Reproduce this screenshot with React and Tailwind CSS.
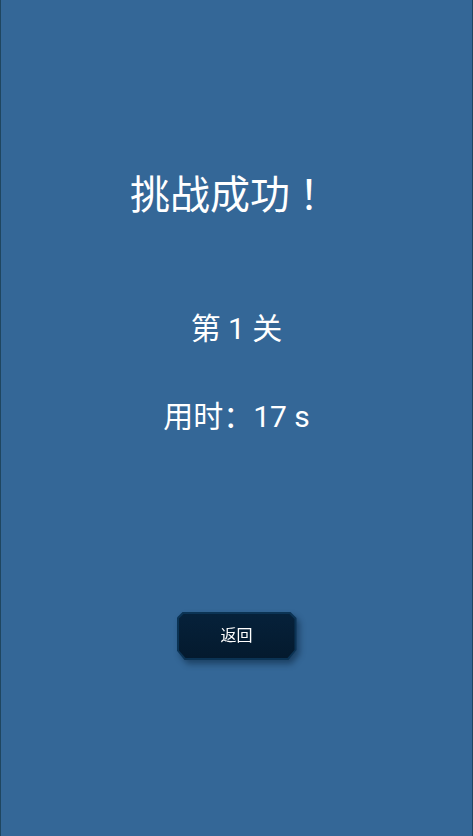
// Result screen shown after a level is cleared
const FONT = { fontFamily: 'Roboto, "Noto Sans CJK SC", sans-serif' };

function BackButton() {
  return (
    <div className="relative w-[120px] h-[48px] drop-shadow-[3px_4px_3px_rgba(0,20,40,0.45)]">
      <div className="absolute inset-0 bg-[#0b3354] [clip-path:polygon(6px_0,114px_0,120px_6px,120px_38px,112px_48px,8px_48px,0_38px,0_6px)]" />
      <button className="absolute inset-[2px] flex items-center justify-center bg-gradient-to-b from-[#06213a] to-[#041a2e] text-white text-[16px] [clip-path:polygon(5px_0,111px_0,116px_5px,116px_36px,109px_44px,7px_44px,0_36px,0_5px)]">
        返回
      </button>
    </div>
  );
}

export default function App() {
  return (
    <div
      className="w-[473px] h-[836px] bg-[#346797] flex flex-col items-center border-x border-[#1f4660]"
      style={FONT}
    >
      <h1 className="mt-[166px] mr-[4px] h-[60px] text-[40px] leading-[60px] text-white font-normal">
        挑战成功<span className="ml-[9px]">！</span>
      </h1>
      <p className="mt-[84px] text-[30px] leading-[38px] text-white">第 1 关</p>
      <p className="mt-[50px] text-[30px] leading-[38px] text-white">用时：17 s</p>
      <div className="mt-[176px]">
        <BackButton />
      </div>
    </div>
  );
}
